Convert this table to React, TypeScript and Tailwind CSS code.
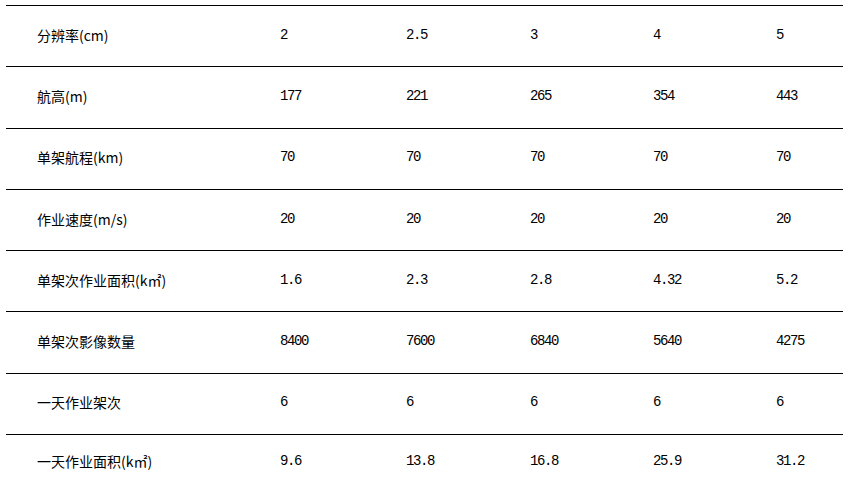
const rows: { label: React.ReactNode; values: string[] }[] = [
  { label: '分辨率(cm)', values: ['2', '2.5', '3', '4', '5'] },
  { label: '航高(m)', values: ['177', '221', '265', '354', '443'] },
  { label: '单架航程(km)', values: ['70', '70', '70', '70', '70'] },
  { label: '作业速度(m/s)', values: ['20', '20', '20', '20', '20'] },
  { label: '单架次作业面积(k㎡)', values: ['1.6', '2.3', '2.8', '4.32', '5.2'] },
  { label: '单架次影像数量', values: ['8400', '7600', '6840', '5640', '4275'] },
  { label: '一天作业架次', values: ['6', '6', '6', '6', '6'] },
  { label: '一天作业面积(k㎡)', values: ['9.6', '13.8', '16.8', '25.9', '31.2'] },
]

const colWidths = ['w-[126px]', 'w-[124px]', 'w-[123px]', 'w-[123px]', 'w-[98px]']

export default function App() {
  return (
    <div className="h-[483px] w-[855px] overflow-hidden bg-white pl-[6px] pt-[5px] text-black font-['Noto_Sans_CJK_SC',sans-serif]">
      <div className="flex w-[837px] flex-col">
        {rows.map((row, i) => (
          <div
            key={i}
            className={`flex items-center border-t border-black pb-[3px] ${i === rows.length - 1 ? 'h-[56px]' : 'h-[61.3px]'}`}
          >
            <div className="w-[243px] pl-[31px] text-[14px] leading-none">{row.label}</div>
            {row.values.map((v, j) => (
              <div
                key={j}
                className={`${colWidths[j]} pl-[31px] font-['Liberation_Mono',monospace] text-[14px] tracking-[-1.4px] leading-none`}
              >
                {v}
              </div>
            ))}
          </div>
        ))}
      </div>
    </div>
  )
}
